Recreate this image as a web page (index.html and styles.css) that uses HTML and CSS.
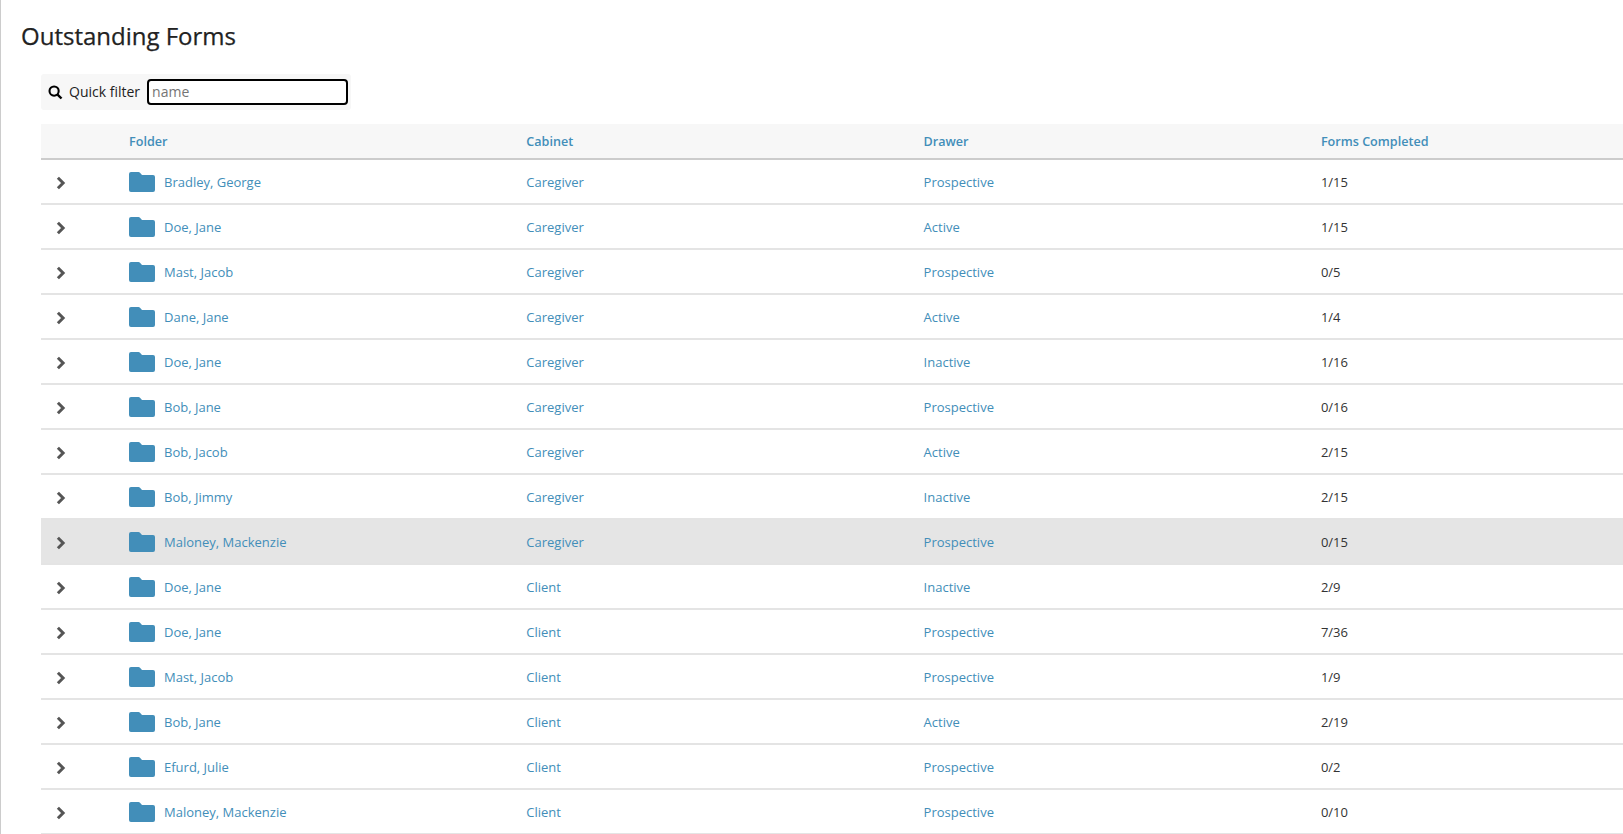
FILE: index.html
```html
<!DOCTYPE html>
<html lang="en">
<head>
<meta charset="utf-8">
<title>Outstanding Forms</title>
<link rel="stylesheet" href="styles.css">
</head>
<body>
<svg class="defs" width="0" height="0" aria-hidden="true">
  <symbol id="chev" viewBox="0 0 10 14"><path d="M1.9 1.8 7.1 7 1.9 12.2" fill="none" stroke="#555" stroke-width="3"/></symbol>
  <symbol id="folder" viewBox="0 0 26 20"><path d="M2 0h7.5a2 2 0 0 1 1.5.7L13 3h11a2 2 0 0 1 2 2v13a2 2 0 0 1-2 2H2a2 2 0 0 1-2-2V2a2 2 0 0 1 2-2z" fill="#428eb9"/></symbol>
</svg>
<main class="page">
  <h1 class="title">Outstanding Forms</h1>
  <div class="content">
    <div class="filter">
      <svg class="search" viewBox="0 0 16 16" aria-hidden="true"><circle cx="6.5" cy="6.5" r="4.9" fill="none" stroke="#000" stroke-width="2.2"/><path d="M10.2 10.2 14.4 14.4" stroke="#000" stroke-width="2.6"/></svg>
      <label class="filter-label" for="q">Quick filter</label>
      <input class="filter-input" id="q" placeholder="name">
    </div>
    <table class="grid">
      <colgroup><col class="c0"><col class="c1"><col class="c1"><col class="c1"><col></colgroup>
      <thead><tr><th></th><th>Folder</th><th>Cabinet</th><th>Drawer</th><th>Forms Completed</th></tr></thead>
      <tbody>
        <tr><td class="exp"><svg class="chev"><use href="#chev"/></svg></td><td><span class="name"><svg class="folder"><use href="#folder"/></svg>Bradley, George</span></td><td>Caregiver</td><td>Prospective</td><td class="num">1/15</td></tr>
        <tr><td class="exp"><svg class="chev"><use href="#chev"/></svg></td><td><span class="name"><svg class="folder"><use href="#folder"/></svg>Doe, Jane</span></td><td>Caregiver</td><td>Active</td><td class="num">1/15</td></tr>
        <tr><td class="exp"><svg class="chev"><use href="#chev"/></svg></td><td><span class="name"><svg class="folder"><use href="#folder"/></svg>Mast, Jacob</span></td><td>Caregiver</td><td>Prospective</td><td class="num">0/5</td></tr>
        <tr><td class="exp"><svg class="chev"><use href="#chev"/></svg></td><td><span class="name"><svg class="folder"><use href="#folder"/></svg>Dane, Jane</span></td><td>Caregiver</td><td>Active</td><td class="num">1/4</td></tr>
        <tr><td class="exp"><svg class="chev"><use href="#chev"/></svg></td><td><span class="name"><svg class="folder"><use href="#folder"/></svg>Doe, Jane</span></td><td>Caregiver</td><td>Inactive</td><td class="num">1/16</td></tr>
        <tr><td class="exp"><svg class="chev"><use href="#chev"/></svg></td><td><span class="name"><svg class="folder"><use href="#folder"/></svg>Bob, Jane</span></td><td>Caregiver</td><td>Prospective</td><td class="num">0/16</td></tr>
        <tr><td class="exp"><svg class="chev"><use href="#chev"/></svg></td><td><span class="name"><svg class="folder"><use href="#folder"/></svg>Bob, Jacob</span></td><td>Caregiver</td><td>Active</td><td class="num">2/15</td></tr>
        <tr><td class="exp"><svg class="chev"><use href="#chev"/></svg></td><td><span class="name"><svg class="folder"><use href="#folder"/></svg>Bob, Jimmy</span></td><td>Caregiver</td><td>Inactive</td><td class="num">2/15</td></tr>
        <tr class="hover"><td class="exp"><svg class="chev"><use href="#chev"/></svg></td><td><span class="name"><svg class="folder"><use href="#folder"/></svg>Maloney, Mackenzie</span></td><td>Caregiver</td><td>Prospective</td><td class="num">0/15</td></tr>
        <tr><td class="exp"><svg class="chev"><use href="#chev"/></svg></td><td><span class="name"><svg class="folder"><use href="#folder"/></svg>Doe, Jane</span></td><td>Client</td><td>Inactive</td><td class="num">2/9</td></tr>
        <tr><td class="exp"><svg class="chev"><use href="#chev"/></svg></td><td><span class="name"><svg class="folder"><use href="#folder"/></svg>Doe, Jane</span></td><td>Client</td><td>Prospective</td><td class="num">7/36</td></tr>
        <tr><td class="exp"><svg class="chev"><use href="#chev"/></svg></td><td><span class="name"><svg class="folder"><use href="#folder"/></svg>Mast, Jacob</span></td><td>Client</td><td>Prospective</td><td class="num">1/9</td></tr>
        <tr><td class="exp"><svg class="chev"><use href="#chev"/></svg></td><td><span class="name"><svg class="folder"><use href="#folder"/></svg>Bob, Jane</span></td><td>Client</td><td>Active</td><td class="num">2/19</td></tr>
        <tr><td class="exp"><svg class="chev"><use href="#chev"/></svg></td><td><span class="name"><svg class="folder"><use href="#folder"/></svg>Efurd, Julie</span></td><td>Client</td><td>Prospective</td><td class="num">0/2</td></tr>
        <tr><td class="exp"><svg class="chev"><use href="#chev"/></svg></td><td><span class="name"><svg class="folder"><use href="#folder"/></svg>Maloney, Mackenzie</span></td><td>Client</td><td>Prospective</td><td class="num">0/10</td></tr>
      </tbody>
    </table>
  </div>
</main>
</body>
</html>
```
FILE: styles.css
```css
html, body { margin: 0; height: 100%; overflow: hidden; background: #fff; }
body { font-family: "Open Sans", sans-serif; color: #222; }
.defs { display: block; height: 0; }
.page { border-left: 1px solid #ccc; padding: 19px 0 0 20px; height: 100%; box-sizing: border-box; }
.title { margin: 0; font-size: 24px; font-weight: 400; line-height: 33px; color: #222; -webkit-text-stroke: 0.25px #222; }
.content { margin: 22px 0 0 20px; }
.filter { display: inline-flex; align-items: center; width: 310px; height: 36px; box-sizing: border-box; padding-left: 7px; background: #f7f7f7; border-radius: 3px; font-size: 14px; color: #222; vertical-align: top; }
.search { width: 15px; height: 15px; flex: none; }
.filter-label { margin-left: 6px; margin-right: 7px; line-height: 20px; }
.filter-input { width: 201px; height: 26px; box-sizing: border-box; border: 2px solid #000; border-radius: 4px; outline: 0; padding: 0 3px 2px; font: 14px "Open Sans", sans-serif; background: #fff; }
.filter-input::placeholder { color: #757575; opacity: 1; }
.grid { display: table; margin-top: 14px; width: 1582px; border-collapse: collapse; table-layout: fixed; font-size: 13px; color: #428eb9; }
.c0 { width: 80px; }
.c1 { width: 397.3px; }
.grid th { height: 35px; padding: 0 8px; box-sizing: border-box; background: #f7f7f7; border-bottom: 2px solid #ccc; text-align: left; font-size: 12.6px; font-weight: 600; color: #428eb9; }
.grid td { height: 45px; padding: 1px 8px 0; box-sizing: border-box; border-bottom: 2px solid #e4e4e4; background: #fff; color: #428eb9; }
.grid tr.hover td { background: #e5e5e5; }
.grid td.num { color: #333; }
.grid td.exp { padding: 0 0 0 15px; }
.chev { display: block; width: 10px; height: 14px; margin-top: 3px; }
.name { display: flex; align-items: center; }
.folder { width: 26px; height: 20px; margin-right: 9px; flex: none; }
```
